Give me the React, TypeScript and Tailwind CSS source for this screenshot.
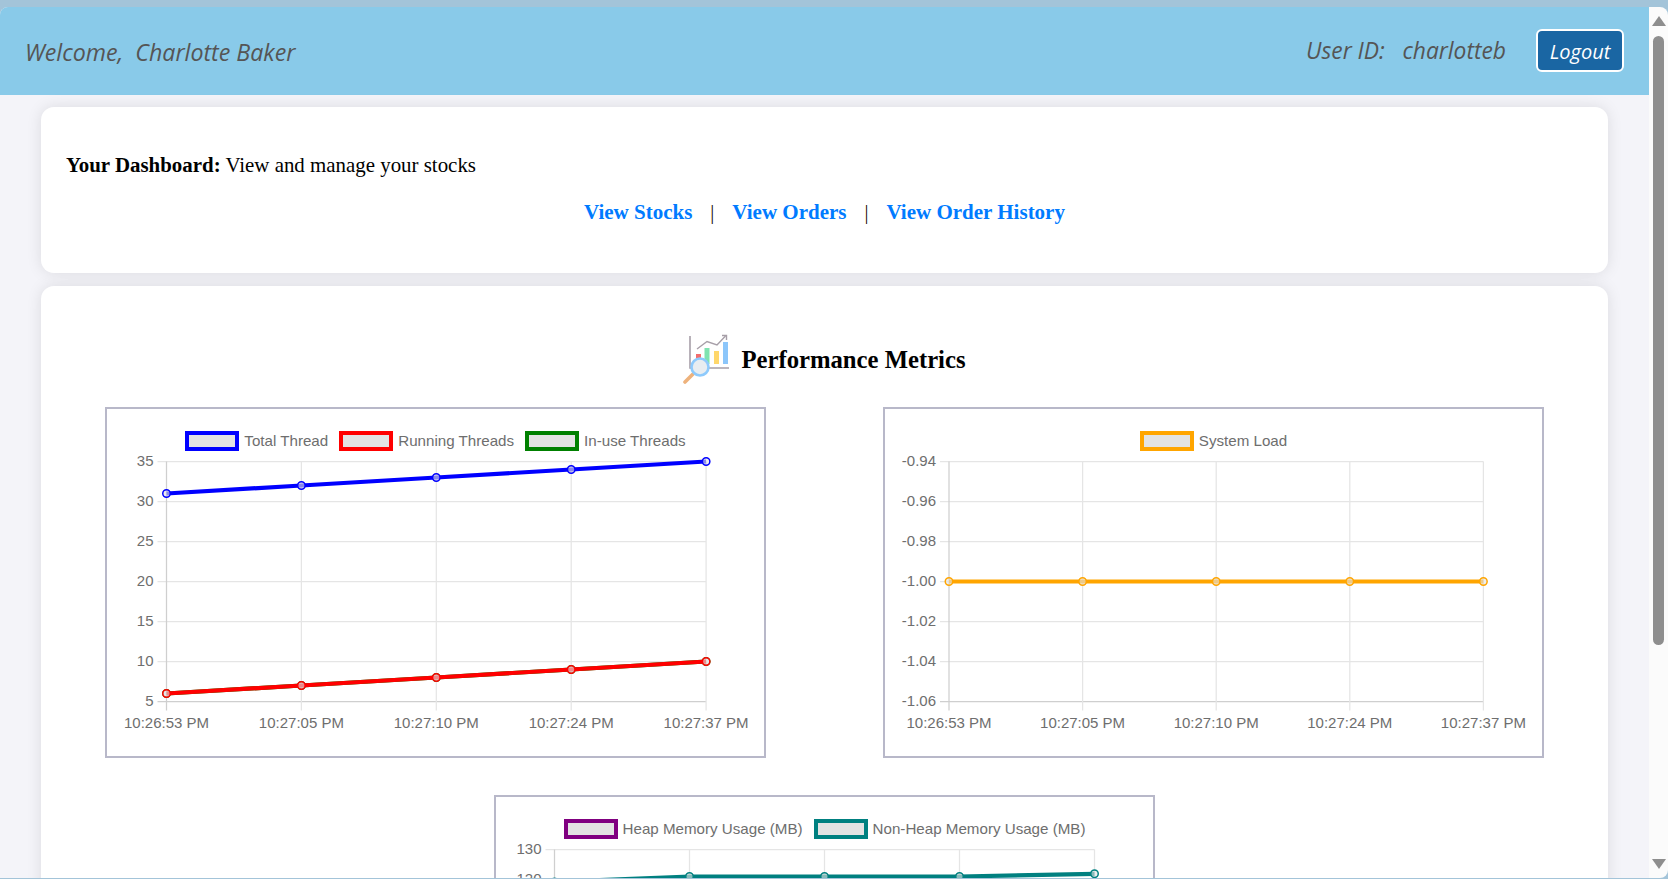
import React from "react";

type Dataset = { color: string; values: number[] };

type ChartProps = {
  legend: { label: string; color: string }[];
  ticks: string[];
  yMax: number;
  yMin: number;
  plotLeft: number;
  step: number;
  data: Dataset[];
};

const times = ["10:26:53 PM", "10:27:05 PM", "10:27:10 PM", "10:27:24 PM", "10:27:37 PM"];
const PLOT_TOP = 9.5;
const PLOT_H = 240;

const Chart = ({ legend, ticks, yMax, yMin, plotLeft, step, data }: ChartProps) => {
  const right = plotLeft + step * 4;
  const bottom = PLOT_TOP + PLOT_H;
  const toY = (v: number) => PLOT_TOP + ((yMax - v) / (yMax - yMin)) * PLOT_H;

  return (
    <div className="w-[661px] h-[351px] shrink-0 border-2 border-[#b8b8c9] bg-white">
      <div className="flex justify-center pt-[22px] h-[43px] gap-[11px]">
        {legend.map((item) => (
          <div key={item.label} className="flex items-center h-[20px] gap-[5px]">
            <span
              className="block w-[54px] h-[20px] border-[4px] bg-[#e3e3e3]"
              style={{ borderColor: item.color }}
            />
            <span className="text-[15.150px] text-[#6e6e6e] font-['Liberation_Sans',sans-serif]">{item.label}</span>
          </div>
        ))}
      </div>
      <svg width="657" height="304" className="block font-['Liberation_Sans',sans-serif]">
        {ticks.map((t, i) => {
          const y = PLOT_TOP + (i * PLOT_H) / (ticks.length - 1);
          return (
            <g key={t}>
              <line
                x1={plotLeft - 9}
                x2={right}
                y1={y}
                y2={y}
                stroke={i === ticks.length - 1 ? "#cfcfcf" : "#e5e5e5"}
                strokeWidth="1.25"
              />
              <text x={plotLeft - 13} y={y + 4.5} textAnchor="end" fontSize="15" fill="#6e6e6e">
                {t}
              </text>
            </g>
          );
        })}
        {times.map((t, i) => {
          const x = plotLeft + i * step;
          return (
            <g key={t}>
              <line
                x1={x}
                x2={x}
                y1={PLOT_TOP}
                y2={bottom + 9}
                stroke={i === 0 ? "#cfcfcf" : "#e5e5e5"}
                strokeWidth="1.25"
              />
              <text x={x} y={bottom + 26.5} textAnchor="middle" fontSize="15" fill="#6e6e6e">
                {t}
              </text>
            </g>
          );
        })}
        {data.map((d) => (
          <g key={d.color}>
            <polyline
              points={d.values.map((v, i) => `${plotLeft + i * step},${toY(v)}`).join(" ")}
              fill="none"
              stroke={d.color}
              strokeWidth="4.2"
            />
            {d.values.map((v, i) => (
              <circle
                key={i}
                cx={plotLeft + i * step}
                cy={toY(v)}
                r="3.75"
                fill="#e3e3e3"
                fillOpacity="0.6"
                stroke={d.color}
                strokeWidth="1.5"
              />
            ))}
          </g>
        ))}
      </svg>
    </div>
  );
};

const MetricsIcon = () => (
  <svg width="48" height="50" viewBox="684 334 48 50" className="block shrink-0">
    <path d="M691 336V368H730" fill="none" stroke="#a79fa8" strokeWidth="1.6" />
    <rect x="697" y="354" width="5" height="10" fill="#f26d6d" />
    <rect x="705.5" y="348" width="5" height="16" fill="#7fe3b0" />
    <rect x="715" y="351" width="5" height="13" fill="#ffd76b" />
    <rect x="724" y="342" width="5" height="22" fill="#8cc6fa" />
    <path d="M698 349L708 341.500L718 345L726.500 336" fill="none" stroke="#a79fa8" strokeWidth="1.4" />
    <path d="M723 335.500H727.500V340" fill="none" stroke="#a79fa8" strokeWidth="1.4" />
    <path d="M686 382L694 374" stroke="#eeb27c" strokeWidth="3.6" strokeLinecap="round" />
    <circle cx="701" cy="367" r="8.500" fill="#e8edf1" stroke="#8ecafc" strokeWidth="2.6" />
  </svg>
);

const Scrollbar = () => (
  <div className="w-[19px] shrink-0 bg-[#fbfbfb] flex flex-col items-center pt-[9px] pb-[9px]">
    <div className="w-0 h-0 border-x-[7px] border-x-transparent border-b-[10px] border-b-[#8e8e8e]" />
    <div className="w-[11px] h-[609px] mt-[10px] rounded-full bg-[#8e8e8e]" />
    <div className="flex-1" />
    <div className="w-0 h-0 border-x-[7px] border-x-transparent border-t-[10px] border-t-[#8e8e8e]" />
  </div>
);

const App = () => {
  return (
    <div className="h-screen overflow-hidden bg-[#a3c4d9] pt-[7px] pb-px">
      <div className="h-full flex overflow-hidden rounded-t-lg rounded-br-lg">
        <div className="flex-1 min-w-0 bg-[#f4f4f9] overflow-hidden">
          <header className="h-[88px] bg-[#89cae9] flex items-center justify-between pl-[25px] pr-[25px] italic font-medium font-['Open_Sans',sans-serif] text-[22.800px] text-[#555]">
            <div className="whitespace-pre pt-[3px] text-[23.200px]">Welcome,  Charlotte Baker</div>
            <div className="flex items-center">
              <span className="whitespace-pre pt-[1px]">User ID:   charlotteb</span>
              <button className="ml-[30px] -mt-[1px] pt-[2px] w-[88px] h-[43px] rounded-[6px] border-2 border-white bg-[#1a66a3] text-white italic font-normal text-[20px]">
                Logout
              </button>
            </div>
          </header>

          <main className="px-[41px] pt-[12px] font-['Liberation_Serif',serif] text-black">
            <section className="h-[166px] bg-white rounded-[13px] shadow-[0_0_15px_rgba(0,0,0,0.1)] pt-[44px] px-[25px] text-[20.900px] leading-[28px]">
              <p>
                <b>Your Dashboard:</b> View and manage your stocks
              </p>
              <div className="mt-[19px] flex justify-center items-center text-[21px] font-bold text-[#007bff]">
                <a>View Stocks</a>
                <span className="mx-[18px] font-normal text-[#1a0d00] text-[20px]">|</span>
                <a>View Orders</a>
                <span className="mx-[18px] font-normal text-[#1a0d00] text-[20px]">|</span>
                <a>View Order History</a>
              </div>
            </section>

            <section className="mt-[13px] bg-white rounded-[13px] shadow-[0_0_15px_rgba(0,0,0,0.1)] px-[64px] pt-[48px] pb-[40px]">
              <h2 className="flex justify-center items-center gap-[10px] h-[50px] text-[24.700px] font-bold">
                <MetricsIcon />
                <span className="pt-[2px]">Performance Metrics</span>
              </h2>
              <div className="mt-[23px] flex justify-between">
                <Chart
                  legend={[
                    { label: "Total Thread", color: "#0000ff" },
                    { label: "Running Threads", color: "#ff0000" },
                    { label: "In-use Threads", color: "#008000" },
                  ]}
                  ticks={["35", "30", "25", "20", "15", "10", "5"]}
                  yMax={35}
                  yMin={5}
                  plotLeft={59.5}
                  step={134.9}
                  data={[
                    { color: "#008000", values: [6, 7, 8, 9, 10] },
                    { color: "#ff0000", values: [6, 7, 8, 9, 10] },
                    { color: "#0000ff", values: [31, 32, 33, 34, 35] },
                  ]}
                />
                <Chart
                  legend={[{ label: "System Load", color: "#ffa500" }]}
                  ticks={["-0.94", "-0.96", "-0.98", "-1.00", "-1.02", "-1.04", "-1.06"]}
                  yMax={-0.94}
                  yMin={-1.06}
                  plotLeft={64}
                  step={133.6}
                  data={[{ color: "#ffa500", values: [-1, -1, -1, -1, -1] }]}
                />
              </div>
              <div className="mt-[37px] flex justify-center">
                <Chart
                  legend={[
                    { label: "Heap Memory Usage (MB)", color: "#800080" },
                    { label: "Non-Heap Memory Usage (MB)", color: "#008080" },
                  ]}
                  ticks={["130", "120", "110", "100", "90", "80", "70", "60", "50"]}
                  yMax={130}
                  yMin={50}
                  plotLeft={58.5}
                  step={135}
                  data={[{ color: "#008080", values: [119.2, 121, 121, 121, 121.9] }]}
                />
              </div>
            </section>
          </main>
        </div>
        <Scrollbar />
      </div>
    </div>
  );
};

export default App;
